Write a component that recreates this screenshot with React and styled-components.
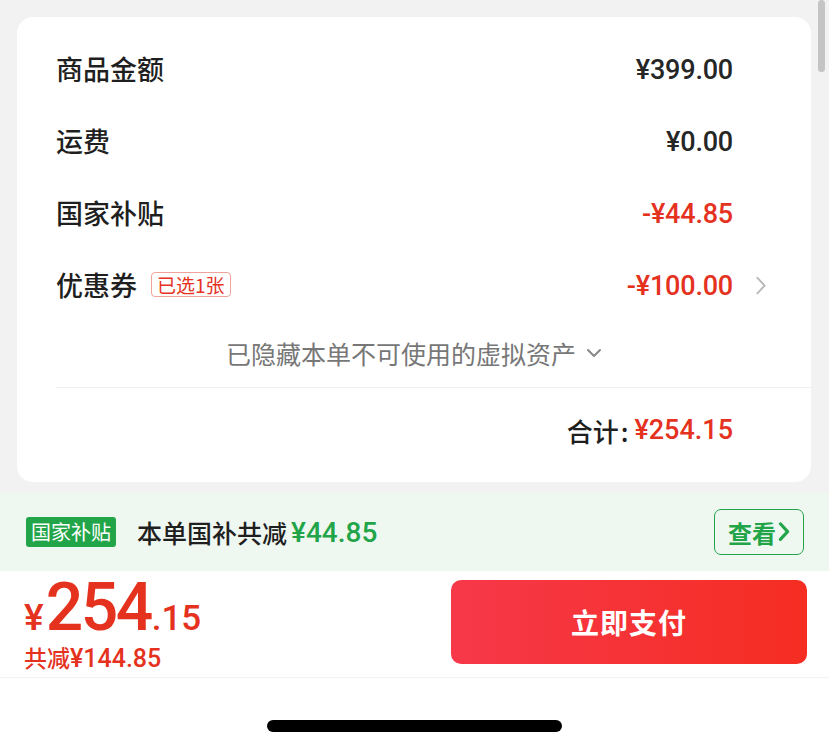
import React from 'react'
import styled, { createGlobalStyle } from 'styled-components'

const GlobalStyle = createGlobalStyle`
  html, body {
    margin: 0;
    padding: 0;
    background: #ffffff;
    font-family: "Noto Sans CJK SC", "Noto Sans", sans-serif;
  }
`

const RED = '#e5321f'
const GREEN = '#22a548'

const rows = [
  { label: '商品金额', value: '¥399.00' },
  { label: '运费', value: '¥0.00' },
  { label: '国家补贴', value: '-¥44.85', red: true },
  { label: '优惠券', value: '-¥100.00', red: true, tag: '已选1张', more: true },
]

const Page = styled.div`
  width: 829px;
  min-height: 750px;
  display: flex;
  flex-direction: column;
  background: #ffffff;
  position: relative;
`

const Top = styled.div`
  background: #f2f2f2;
  padding: 17px 18px 11px 17px;
`

const ScrollThumb = styled.div`
  position: absolute;
  top: 0;
  right: 4px;
  width: 7px;
  height: 72px;
  border-radius: 4px;
  background: #c4c4c4;
`

const Card = styled.div`
  background: #ffffff;
  border-radius: 16px;
  padding: 17px 0 10px 39px;
`

const Row = styled.div`
  display: flex;
  align-items: center;
  height: 72px;
`

const Label = styled.div`
  font-size: 27px;
  font-weight: 500;
  color: #1f1f1f;
  display: flex;
  align-items: center;
  gap: 14px;
  margin-top: -3px;
`

const Tag = styled.span`
  font-size: 19px;
  font-weight: 400;
  line-height: 23px;
  color: ${RED};
  border: 1px solid #f0a39a;
  border-radius: 4px;
  padding: 0 5px;
`

const Value = styled.div`
  margin-left: auto;
  font-family: Roboto, "Noto Sans CJK SC", sans-serif;
  font-size: 27px;
  font-weight: 500;
  letter-spacing: -0.2px;
  color: ${p => (p.$red ? RED : '#262626')};
`

const Trail = styled.div`
  width: 78px;
  padding-left: 22px;
  box-sizing: border-box;
  display: flex;
  align-items: center;
  color: #b5b5b5;
`

const Hidden = styled.div`
  height: 66px;
  display: flex;
  align-items: center;
  justify-content: center;
  gap: 10px;
  padding: 0 39px 4px 0;
  box-sizing: border-box;
  font-size: 25px;
  color: #777777;
  border-bottom: 1px solid #f0f0f0;
`

const TotalRow = styled(Row)`
  height: 84px;
`

const TotalValue = styled.div`
  margin-left: auto;
  font-size: 26px;
  font-weight: 500;
  color: #1f1f1f;
  display: flex;
  align-items: center;
`

const Colon = styled.span`
  margin: 0 6px 0 2px;
`

const TotalNum = styled.span`
  font-family: Roboto, sans-serif;
  font-weight: 500;
  font-size: 27px;
  color: ${RED};
`

const SubsidyBar = styled.div`
  height: 78px;
  background: #eff7f1;
  display: flex;
  align-items: center;
  padding: 0 25px 0 26px;
`

const GreenTag = styled.span`
  background: ${GREEN};
  color: #ffffff;
  font-size: 20px;
  line-height: 30px;
  padding: 0 5px;
  border-radius: 3px;
  margin-right: 21px;
`

const SubsidyText = styled.span`
  font-size: 25px;
  font-weight: 500;
  color: #1f1f1f;
`

const GreenNum = styled.span`
  font-family: Roboto, sans-serif;
  font-weight: 500;
  font-size: 28px;
  color: ${GREEN};
  margin-left: 4px;
`

const ViewButton = styled.button`
  margin-left: auto;
  height: 46px;
  width: 90px;
  border: 1.5px solid ${GREEN};
  border-radius: 7px;
  background: transparent;
  color: ${GREEN};
  font-family: "Noto Sans CJK SC", sans-serif;
  font-size: 24px;
  font-weight: 700;
  display: flex;
  align-items: center;
  justify-content: center;
  gap: 2px;
  padding: 0;
`

const PayBar = styled.div`
  height: 107px;
  box-sizing: border-box;
  display: flex;
  align-items: flex-start;
  padding: 9px 22px 0 24px;
  border-bottom: 1px solid #f2f2f2;
`

const PriceBlock = styled.div`
  display: flex;
  flex-direction: column;
  color: ${RED};
  font-family: Roboto, sans-serif;
`

const BigPrice = styled.div`
  display: flex;
  align-items: baseline;
  font-weight: 500;
  height: 58px;
  line-height: 1;
  margin-top: 2px;
`

const Yen = styled.span`
  font-size: 37px;
  margin-right: 2px;
`

const Integer = styled.span`
  font-size: 66px;
  letter-spacing: -2.5px;
  line-height: 52px;
`

const Decimal = styled.span`
  font-size: 35px;
  margin-left: 1px;
`

const Saved = styled.div`
  font-family: "Noto Sans CJK SC", sans-serif;
  font-size: 23px;
  font-weight: 500;
  line-height: 26px;
  margin-top: 4px;
  & b {
    font-family: Roboto, sans-serif;
    font-weight: 500;
    font-size: 25px;
  }
`

const PayButton = styled.button`
  margin-left: auto;
  width: 356px;
  height: 84px;
  border: none;
  border-radius: 10px;
  background: linear-gradient(90deg, #f63849 0%, #f52d22 100%);
  color: #ffffff;
  font-family: "Noto Sans CJK SC", sans-serif;
  font-size: 28px;
  font-weight: 700;
  letter-spacing: 1px;
`

const HomeArea = styled.div`
  flex: 1;
  display: flex;
  justify-content: center;
  padding-top: 42px;
`

const HomeIndicator = styled.div`
  width: 295px;
  height: 12px;
  border-radius: 6px;
  background: #000000;
`

const Chevron = ({ size = 14, color = 'currentColor', width = 2 }) => (
  <svg width={size} height={size * 1.6} viewBox="0 0 10 16" fill="none">
    <path d="M2 1.5 L8 8 L2 14.5" stroke={color} strokeWidth={width} strokeLinecap="round" strokeLinejoin="round" />
  </svg>
)

const ChevronDown = () => (
  <svg width="16" height="10" viewBox="0 0 16 10" fill="none">
    <path d="M2 2 L8 8 L14 2" stroke="#888" strokeWidth="2" strokeLinecap="round" strokeLinejoin="round" />
  </svg>
)

export default function App() {
  return (
    <Page>
      <GlobalStyle />
      <ScrollThumb />
      <Top>
        <Card>
          {rows.map(r => (
            <Row key={r.label}>
              <Label>
                {r.label}
                {r.tag && <Tag>{r.tag}</Tag>}
              </Label>
              <Value $red={r.red}>{r.value}</Value>
              <Trail>{r.more && <Chevron size={12} color="#b8b8b8" width={1.6} />}</Trail>
            </Row>
          ))}
          <Hidden>
            已隐藏本单不可使用的虚拟资产
            <ChevronDown />
          </Hidden>
          <TotalRow>
            <TotalValue>
              合计<Colon>:</Colon>
              <TotalNum>¥254.15</TotalNum>
            </TotalValue>
            <Trail />
          </TotalRow>
        </Card>
      </Top>
      <SubsidyBar>
        <GreenTag>国家补贴</GreenTag>
        <SubsidyText>本单国补共减</SubsidyText>
        <GreenNum>¥44.85</GreenNum>
        <ViewButton>
          查看
          <Chevron size={12} color={GREEN} width={2.6} />
        </ViewButton>
      </SubsidyBar>
      <PayBar>
        <PriceBlock>
          <BigPrice>
            <Yen>¥</Yen>
            <Integer>254</Integer>
            <Decimal>.15</Decimal>
          </BigPrice>
          <Saved>
            共减<b>¥144.85</b>
          </Saved>
        </PriceBlock>
        <PayButton>立即支付</PayButton>
      </PayBar>
      <HomeArea>
        <HomeIndicator />
      </HomeArea>
    </Page>
  )
}
